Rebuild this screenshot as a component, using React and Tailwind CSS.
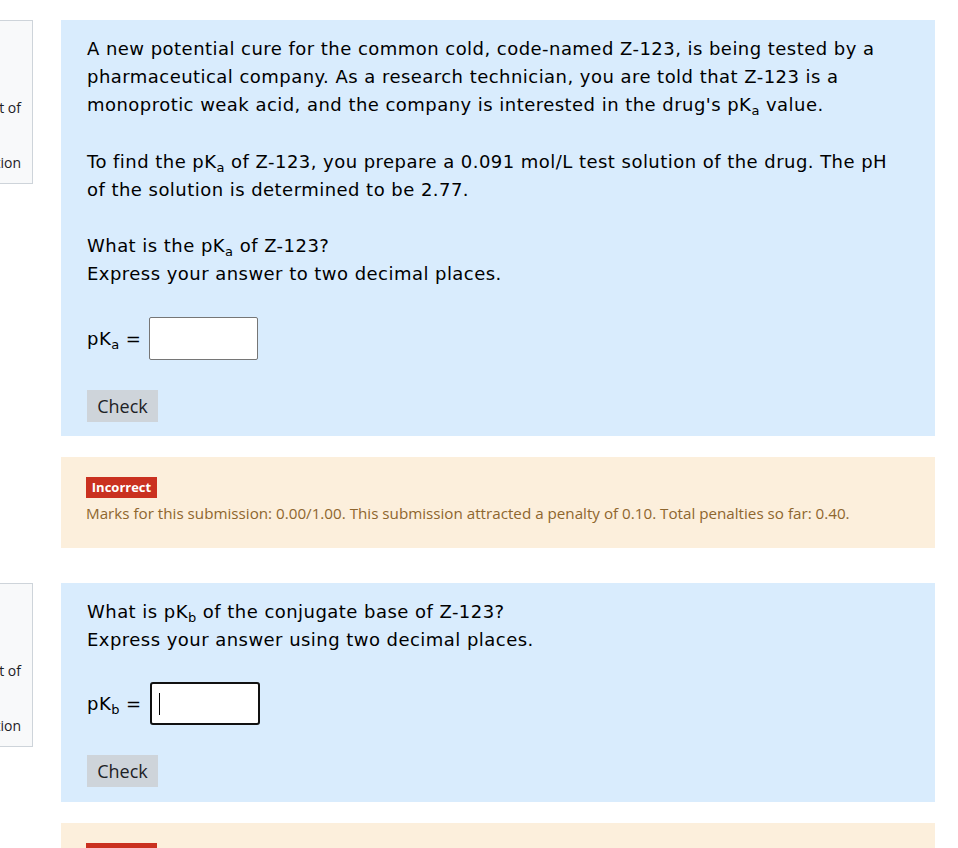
import React from "react";

const Q = { fontFamily: '"DejaVu Sans", Verdana, sans-serif' };
const S = { fontFamily: '"Open Sans", "Noto Sans", "Segoe UI", sans-serif' };

function Side() {
  return (
    <div className="w-[33px] shrink-0">
      <div className="h-[164px] overflow-hidden border border-l-0 border-[#ced4da] bg-[#f8f9fa] text-[#1d2125] text-[14px]" style={S}>
        <div className="flex justify-end whitespace-nowrap pr-[11px] mt-[77px] h-[20px] leading-[20px]">Marked out of</div>
        <div className="flex justify-end whitespace-nowrap pr-[11px] mt-[35px] h-[20px] leading-[20px]">Flag question</div>
      </div>
    </div>
  );
}

function Check() {
  return (
    <button className="h-[32px] w-[71px] bg-[#ced4da] text-[#1d2125] text-[18px] leading-[32px] tracking-normal" style={S}>
      Check
    </button>
  );
}

function Sub({ c }) {
  return <span className="relative top-[4px] text-[13px] leading-none align-baseline">{c}</span>;
}

function Badge() {
  return (
    <div className="flex">
      <span className="block h-[21px] w-[71px] text-center bg-[#ca3120] text-white text-[13px] font-bold leading-[21px]">Incorrect</span>
    </div>
  );
}

export default function App() {
  return (
    <div className="w-[958px] h-[848px] overflow-hidden bg-white">
      <div className="flex pt-[20px]">
        <Side />
        <div className="ml-[28px] w-[874px] flex flex-col">
          <div className="bg-[#d9ecfd] pl-[26px] pr-[34px] pt-[15px] pb-[14px] text-[18px] leading-[28px] tracking-[0.46px] text-[#000]" style={Q}>
            <p>
              A new potential cure for the common cold, code-named Z-123, is being tested by a pharmaceutical company. As a research technician, you are told that Z-123 is a monoprotic weak acid, and the company is interested in the drug's pK<Sub c="a" /> value.
            </p>
            <p className="mt-[29px]">
              To find the pK<Sub c="a" /> of Z-123, you prepare a 0.091 mol/L test solution of the drug. The pH of the solution is determined to be 2.77.
            </p>
            <p className="mt-[28px]">
              What is the pK<Sub c="a" /> of Z-123?
              <br />
              Express your answer to two decimal places.
            </p>
            <div className="mt-[29px] flex items-center h-[43px]">
              <span>pK<Sub c="a" /> =</span>
              <div className="ml-[8px] w-[109px] h-[43px] bg-white border border-[#767676] rounded-[2px]" />
            </div>
            <div className="mt-[30px] flex">
              <Check />
            </div>
          </div>
          <div className="mt-[21px] h-[91px] bg-[#fcefdc] pl-[25px] pt-[20px]" style={S}>
            <Badge />
            <div className="mt-[3px] text-[15.2px] leading-[24px] text-[#8e662e]">
              Marks for this submission: 0.00/1.00. This submission attracted a penalty of 0.10. Total penalties so far: 0.40.
            </div>
          </div>
        </div>
      </div>
      <div className="flex pt-[35px]">
        <Side />
        <div className="ml-[28px] w-[874px] flex flex-col">
          <div className="bg-[#d9ecfd] pl-[26px] pr-[34px] pt-[15px] pb-[15px] text-[18px] leading-[28px] tracking-[0.46px] text-[#000]" style={Q}>
            <p>
              What is pK<Sub c="b" /> of the conjugate base of Z-123?
              <br />
              Express your answer using two decimal places.
            </p>
            <div className="mt-[28px] flex items-center h-[43px]">
              <span>pK<Sub c="b" /> =</span>
              <div className="ml-[8px] w-[110px] h-[43px] bg-white border-2 border-[#111] rounded-[3px] flex items-center pl-[7px]">
                <div className="w-[1px] h-[22px] bg-black" />
              </div>
            </div>
            <div className="mt-[30px] flex">
              <Check />
            </div>
          </div>
          <div className="mt-[21px] h-[91px] bg-[#fcefdc] pl-[25px] pt-[20px]" style={S}>
            <Badge />
          </div>
        </div>
      </div>
    </div>
  );
}
